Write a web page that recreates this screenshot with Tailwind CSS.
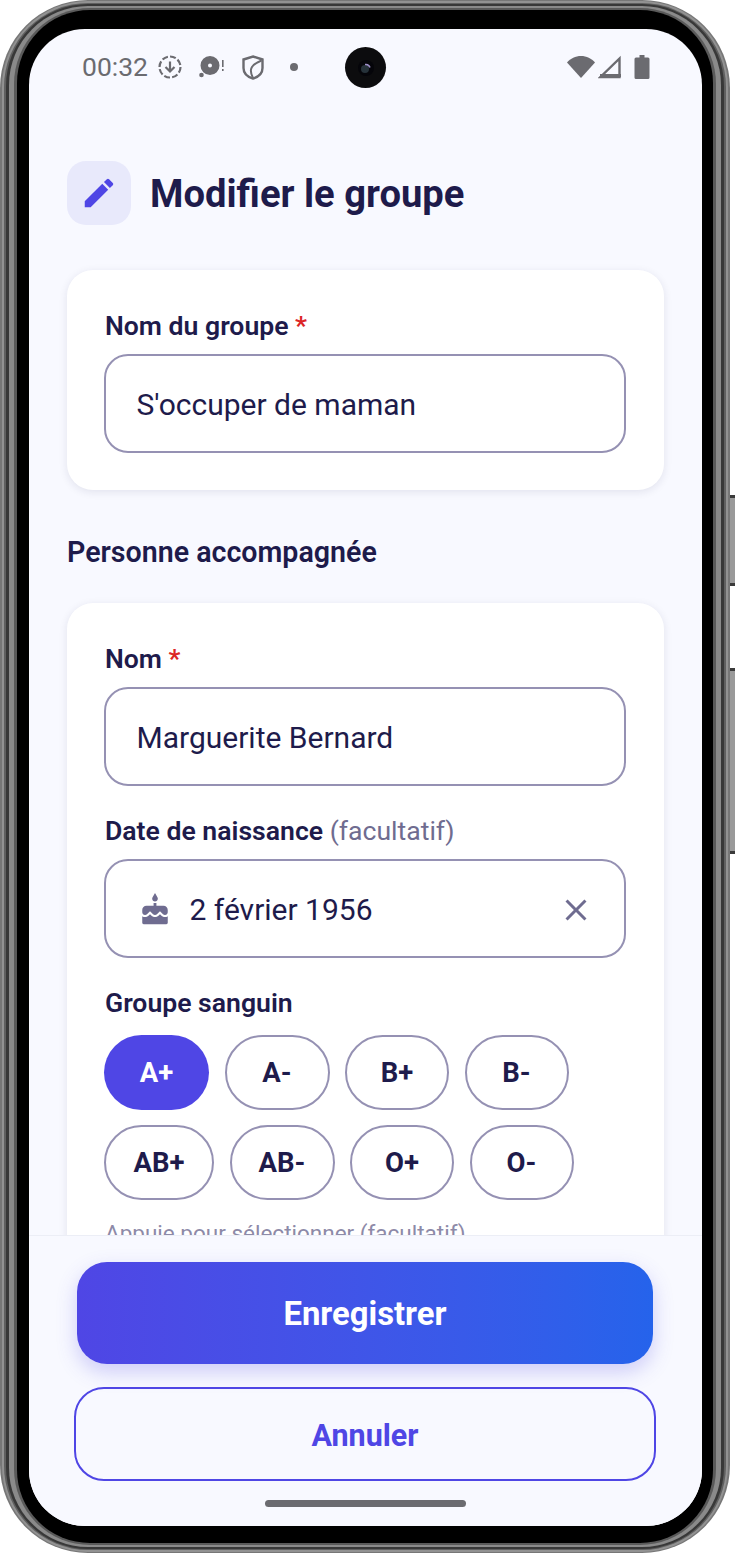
<!DOCTYPE html>
<html lang="fr">
<head>
    <meta charset="UTF-8">
    <meta name="viewport" content="width=device-width, initial-scale=1.0">
    <title>Modifier le groupe</title>
    <script src="https://cdn.jsdelivr.net/npm/@tailwindcss/browser@4"></script>
</head>
<body class="bg-white">

    <!-- Telephone -->
    <div class="relative w-[735px] h-[1553px] overflow-hidden bg-white font-[family-name:Roboto,sans-serif]">

        <!-- Boutons lateraux -->
        <div class="absolute left-[728px] top-[495px] w-[7px] h-[91px] bg-[#9a9a9a] border-y-[3px] border-[#3a3a3a]"></div>
        <div class="absolute left-[728px] top-[668px] w-[7px] h-[186px] bg-[#9a9a9a] border-y-[3px] border-[#3a3a3a]"></div>

        <!-- Cadre -->
        <div class="absolute left-0 top-0 w-[730px] h-[1553px] rounded-[88px] bg-[#777777] px-[2px] py-[1px]">
            <div class="w-full h-full rounded-[86px] bg-[#929292] px-[2px] py-[2px]">
                <div class="w-full h-full rounded-[84px] bg-[#606060] px-[2px] py-[1px]">
                    <div class="w-full h-full rounded-[82px] bg-[#383838] px-[3px] py-[2px]">
                        <div class="w-full h-full rounded-[79px] bg-[#8a8a8a] px-[5px] py-[2px]">
                            <div class="w-full h-full rounded-[76px] bg-[#5a5a5a] px-[3px] py-[2px]">
                                <div class="w-full h-full rounded-[73px] bg-black pl-[12px] pr-[11px] pt-[19px] pb-[17px]">

                                    <!-- Ecran -->
                                    <div class="relative flex flex-col w-[673px] h-[1497px] rounded-[56px] overflow-hidden bg-[#f8f9ff]">

                                        <!-- Barre d'etat -->
                                        <div class="relative flex items-center justify-between h-[76px] shrink-0 pl-[53px] pr-[52px]">
                                            <div class="flex items-center">
                                                <span class="block w-[76px] text-[26.500px] leading-[32px] text-[#6b6b70]">00:32</span>
                                                <svg class="w-[24px] h-[24px] mr-[17px]" viewBox="0 0 24 24" fill="none" stroke="#6b6b70" stroke-width="2.200">
                                                    <circle cx="12" cy="12" r="10.500" stroke-dasharray="6 2.200"/>
                                                    <path d="M12 6.500v10M7.500 12 12 16.500l4.500-4.500"/>
                                                </svg>
                                                <svg class="w-[26px] h-[26px] mr-[17px]" viewBox="0 0 26 26" fill="#6b6b70">
                                                    <path fill-rule="evenodd" d="M11 2a9.500 9.500 0 1 1 0 19 9.500 9.500 0 0 1 0-19zm0 7.500a2 2 0 1 0 0 4 2 2 0 0 0 0-4z"/>
                                                    <circle cx="2.500" cy="21" r="2.300"/>
                                                    <rect x="23" y="6" width="1.600" height="7"/>
                                                    <rect x="23" y="15" width="1.600" height="2"/>
                                                </svg>
                                                <svg class="w-[22px] h-[25px] mr-[26px]" viewBox="0 0 22 25" fill="none" stroke="#6b6b70" stroke-width="2.400">
                                                    <path d="M11 1.500 20.500 4.500v8.500c0 5-3.700 8.800-9.500 10.500C5.200 21.800 1.500 18 1.500 13V4.500z"/>
                                                    <path d="M19.500 5.500C10 9.500 6 13.500 11 23" stroke-width="2"/>
                                                </svg>
                                                <span class="block w-[8px] h-[8px] rounded-full bg-[#6b6b70]"></span>
                                            </div>
                                            <div class="flex items-center">
                                                <svg class="w-[28px] h-[24px] mr-[3px]" viewBox="0 0 28 24" fill="#6b6b70"><path d="M0 7.500C3.500 3.500 8.500 1 14 1s10.500 2.500 14 6.500L14 23z"/></svg>
                                                <svg class="w-[23px] h-[24px] mr-[13px]" viewBox="0 0 23 24" fill="none" stroke="#6b6b70" stroke-width="2.400"><path d="M21.500 3.500V22H2.500z"/><path d="M2 20.500h21" stroke-width="3"/></svg>
                                                <svg class="w-[16px] h-[24px]" viewBox="0 0 15 24" fill="#6b6b70"><path d="M5 0h5v2.500h3.500a1.500 1.500 0 0 1 1.500 1.500v18.500a1.500 1.500 0 0 1-1.500 1.500h-12A1.500 1.500 0 0 1 0 22.500V4a1.500 1.500 0 0 1 1.500-1.500H5z"/></svg>
                                            </div>
                                            <!-- Camera -->
                                            <div class="absolute left-[316px] top-[18px] flex items-center justify-center w-[41px] h-[41px] rounded-full bg-[#0c0c0e]">
                                                <svg class="w-[18px] h-[18px]" viewBox="0 0 18 18">
                                                    <circle cx="9" cy="9" r="8" fill="#05050a"/>
                                                    <circle cx="8" cy="10" r="4" fill="#26323a"/>
                                                    <path d="M8 5.500a4.500 4.500 0 0 1 5 3" fill="none" stroke="#9d8fc8" stroke-width="1.500"/>
                                                </svg>
                                            </div>
                                        </div>

                                        <!-- Contenu -->
                                        <main class="flex-1 min-h-0 overflow-hidden px-[38px] pt-[56px]">
                                            <div class="flex items-center">
                                                <div class="flex items-center justify-center w-[64px] h-[64px] rounded-[19px] bg-[#e8e9fb]">
                                                    <svg class="w-[38px] h-[38px]" viewBox="0 0 24 24" fill="#4f46e5"><path d="M3 17.250V21h3.750L17.810 9.940l-3.750-3.750L3 17.250zM20.710 7.040a1 1 0 0 0 0-1.410l-2.340-2.340a1 1 0 0 0-1.410 0l-1.830 1.830 3.750 3.750 1.830-1.830z"/></svg>
                                                </div>
                                                <h1 class="ml-[19px] mt-[2px] text-[38.200px] leading-[44px] font-bold text-[#1e1b4b]">Modifier le groupe</h1>
                                            </div>

                                            <!-- Carte groupe -->
                                            <section class="mt-[45px] rounded-[26px] bg-white pl-[37px] pr-[38px] pt-[39px] pb-[37px] shadow-[0_2px_8px_rgba(30,27,75,0.1)]">
                                                <label class="block pl-[1px] text-[26.600px] leading-[34px] font-semibold text-[#1e1b4b]">Nom du groupe <span class="text-[#dc2626]">*</span></label>
                                                <div class="flex items-center mt-[11px] h-[99px] pt-[2px] px-[30.500px] rounded-[24px] border-[2.500px] border-[#9591b3] text-[30px] text-[#1e1b4b]">S'occuper de maman</div>
                                            </section>

                                            <h2 class="mt-[44px] text-[28.600px] leading-[36px] font-semibold text-[#1e1b4b]">Personne accompagnée</h2>

                                            <!-- Carte personne -->
                                            <section class="mt-[33px] rounded-[26px] bg-white pl-[37px] pr-[38px] pt-[39px] pb-[38px] shadow-[0_2px_8px_rgba(30,27,75,0.1)]">
                                                <label class="block pl-[1px] text-[26.600px] leading-[34px] font-semibold text-[#1e1b4b]">Nom <span class="text-[#dc2626]">*</span></label>
                                                <div class="flex items-center mt-[11px] h-[99px] pt-[2px] px-[30.500px] rounded-[24px] border-[2.500px] border-[#9591b3] text-[30px] text-[#1e1b4b]">Marguerite Bernard</div>

                                                <label class="block pl-[1px] mt-[28px] text-[26.600px] leading-[34px] font-semibold text-[#1e1b4b]">Date de naissance <span class="font-normal text-[#6f6c90]">(facultatif)</span></label>
                                                <div class="flex items-center mt-[11px] h-[99px] pt-[2px] pl-[31.500px] pr-[30px] rounded-[24px] border-[2.500px] border-[#9591b3] text-[30px] text-[#1e1b4b]">
                                                    <svg class="w-[34px] h-[34px] shrink-0" viewBox="0 0 24 24" fill="#6f6c90"><path d="M12 6c1.110 0 2-.9 2-2 0-.38-.1-.73-.29-1.030L12 0l-1.710 2.970c-.19.3-.29.65-.29 1.030 0 1.100.9 2 2 2zm4.600 9.990l-1.070-1.070-1.080 1.070c-1.300 1.300-3.580 1.310-4.890 0l-1.070-1.070-1.090 1.070C6.750 16.640 5.880 17 4.960 17c-.73 0-1.400-.23-1.960-.61V21c0 .55.45 1 1 1h16c.55 0 1-.45 1-1v-4.610c-.56.38-1.230.61-1.960.61-.92 0-1.790-.36-2.440-1.010zM18 9h-5V7h-2v2H6c-1.660 0-3 1.340-3 3v1.540c0 1.080.88 1.960 1.960 1.960.52 0 1.020-.2 1.380-.57l2.140-2.130 2.130 2.130c.74.74 2.030.74 2.770 0l2.140-2.130 2.130 2.130c.37.37.86.57 1.380.57 1.080 0 1.960-.88 1.960-1.960V12C21 10.340 19.660 9 18 9z"/></svg>
                                                    <span class="ml-[18px] flex-1">2 février 1956</span>
                                                    <svg class="w-[36px] h-[36px] shrink-0" viewBox="0 0 24 24" fill="#6f6c90"><path d="M19 6.410 17.590 5 12 10.590 6.410 5 5 6.410 10.590 12 5 17.590 6.410 19 12 13.410 17.590 19 19 17.590 13.410 12z"/></svg>
                                                </div>

                                                <label class="block pl-[1px] mt-[28px] text-[26.600px] leading-[34px] font-semibold text-[#1e1b4b]">Groupe sanguin</label>
                                                <div class="flex flex-wrap gap-x-[15.500px] gap-y-[15px] mt-[15px] w-[500px]">
                                                    <span class="flex items-center justify-center w-[105px] h-[75px] pt-[1px] rounded-full bg-[#4f46e5] text-[27.500px] font-bold text-white">A+</span>
                                                    <span class="flex items-center justify-center w-[105px] h-[75px] pt-[1px] rounded-full border-[2.500px] border-[#9591b3] text-[27.500px] font-bold text-[#1e1b4b]">A-</span>
                                                    <span class="flex items-center justify-center w-[104px] h-[75px] pt-[1px] rounded-full border-[2.500px] border-[#9591b3] text-[27.500px] font-bold text-[#1e1b4b]">B+</span>
                                                    <span class="flex items-center justify-center w-[104px] h-[75px] pt-[1px] rounded-full border-[2.500px] border-[#9591b3] text-[27.500px] font-bold text-[#1e1b4b]">B-</span>
                                                    <span class="flex items-center justify-center w-[110px] h-[75px] pt-[1px] rounded-full border-[2.500px] border-[#9591b3] text-[27.500px] font-bold text-[#1e1b4b]">AB+</span>
                                                    <span class="flex items-center justify-center w-[105px] h-[75px] pt-[1px] rounded-full border-[2.500px] border-[#9591b3] text-[27.500px] font-bold text-[#1e1b4b]">AB-</span>
                                                    <span class="flex items-center justify-center w-[104px] h-[75px] pt-[1px] rounded-full border-[2.500px] border-[#9591b3] text-[27.500px] font-bold text-[#1e1b4b]">O+</span>
                                                    <span class="flex items-center justify-center w-[104px] h-[75px] pt-[1px] rounded-full border-[2.500px] border-[#9591b3] text-[27.500px] font-bold text-[#1e1b4b]">O-</span>
                                                </div>
                                                <p class="pl-[1px] mt-[18px] text-[22.500px] leading-[30px] text-[#8d8aa8]">Appuie pour sélectionner (facultatif)</p>
                                            </section>
                                        </main>

                                        <!-- Actions -->
                                        <footer class="relative shrink-0 h-[291px] border-t border-[#eceef6] bg-[#f8f9ff]">
                                            <div class="flex items-center justify-center mt-[26px] ml-[48px] mr-[49px] h-[102px] pt-[4px] rounded-[30px] bg-linear-to-r from-[#4f46e5] to-[#2563eb] text-[32.800px] font-bold text-white shadow-[0_8px_20px_rgba(79,70,229,0.25)]">Enregistrer</div>
                                            <div class="flex items-center justify-center mt-[23px] ml-[45px] mr-[46px] h-[94px] pt-[3px] rounded-[30px] border-[2.500px] border-[#4f46e5] text-[30.500px] font-bold text-[#4f46e5]">Annuler</div>
                                            <div class="w-[201px] h-[7px] mx-auto mt-[19px] rounded-full bg-[#6b6b70]"></div>
                                        </footer>
                                    </div>
                                </div>
                            </div>
                        </div>
                    </div>
                </div>
            </div>
        </div>
    </div>

</body>
</html>
